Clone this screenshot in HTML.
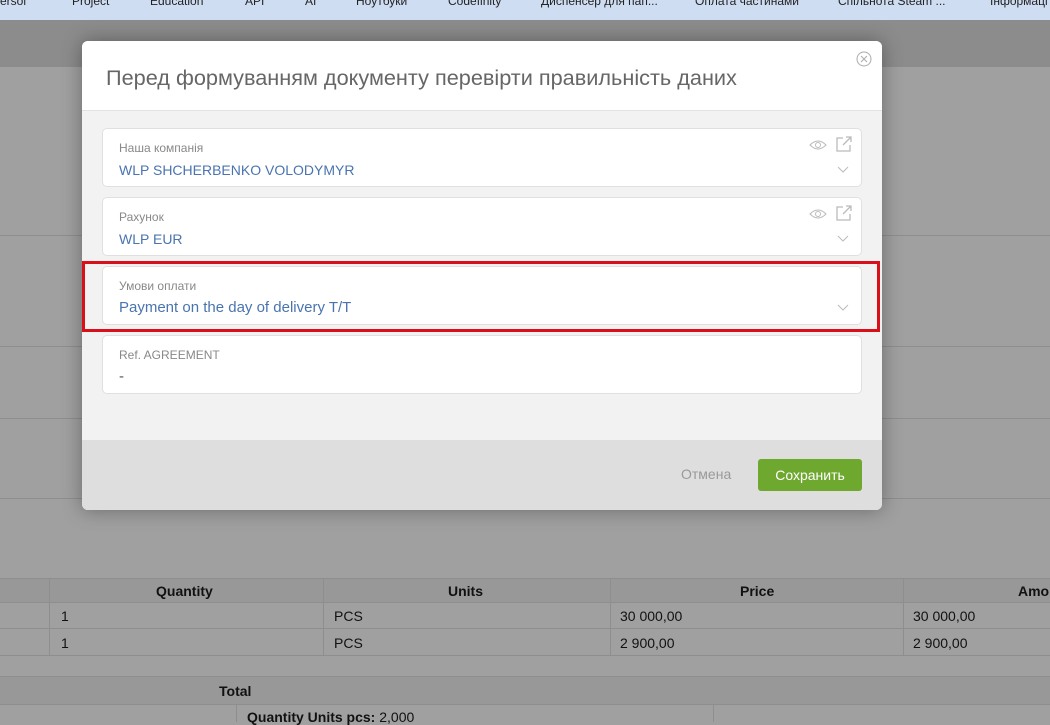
<!DOCTYPE html><html><head><meta charset="utf-8"><style>
*{box-sizing:border-box;margin:0;padding:0}
body{width:1050px;height:722px;overflow:hidden;background:#a0a0a0;font-family:"Liberation Sans","DejaVu Sans",sans-serif;position:relative}
.abs{position:absolute}
.bm{left:0;top:0;width:1050px;height:20px;background:#cfddf3;font-size:12px;color:#222;white-space:nowrap;overflow:hidden}
.bm span{position:absolute;top:-6px}
.hl{left:0;width:1050px;height:1px;background:#8e8e8e}
.vl{width:1px;background:#8e8e8e}
.tx{font-size:14px;color:#111}
.modal{left:82px;top:41px;width:800px;height:469px;border-radius:6px;background:#f2f2f2;overflow:hidden;box-shadow:0 0 20px rgba(0,0,0,.35)}
.hdr{position:absolute;left:0;top:0;width:800px;height:70px;background:#fff;border-bottom:1px solid #e2e2e2}
.hdr h1{position:absolute;left:24px;top:24px;font-weight:normal;font-size:21.7px;color:#666}
.ftr{position:absolute;left:0;top:399px;width:800px;height:70px;background:#dedede}
.f{position:absolute;left:20px;width:760px;height:59px;background:#fff;border:1px solid #e0e0e0;border-radius:5px}
.f .l{position:absolute;left:16px;top:12px;font-size:12px;color:#888}
.f .v{position:absolute;left:16px;top:32px;font-size:15px;color:#4a74b0}
</style></head><body>
<div class="abs bm"><span style="left:0">ersol</span><span style="left:72px">Project</span><span style="left:150px">Education</span><span style="left:245px">API</span><span style="left:305px">AI</span><span style="left:356px">Ноутбуки</span><span style="left:448px">Codefinity</span><span style="left:541px">Диспенсер для пап...</span><span style="left:695px">Оплата частинами</span><span style="left:838px">Спільнота Steam ...</span><span style="left:990px">Інформаці</span></div>
<div class="abs" style="left:0;top:20px;width:1050px;height:47px;background:#8c8c8c"></div>
<div class="abs hl" style="top:235px"></div><div class="abs hl" style="top:346px"></div><div class="abs hl" style="top:418px"></div><div class="abs hl" style="top:498px"></div>
<div class="abs hl" style="top:578px"></div><div class="abs hl" style="top:602px"></div><div class="abs hl" style="top:628px"></div><div class="abs hl" style="top:655px"></div><div class="abs hl" style="top:676px"></div><div class="abs hl" style="top:704px"></div>
<div class="abs" style="left:0;top:579px;width:1050px;height:23px;background:#989898"></div>
<div class="abs" style="left:0;top:677px;width:1050px;height:27px;background:#989898"></div>
<div class="abs vl" style="left:49px;top:578px;height:77px"></div><div class="abs vl" style="left:323px;top:578px;height:77px"></div><div class="abs vl" style="left:610px;top:578px;height:77px"></div><div class="abs vl" style="left:903px;top:578px;height:77px"></div>
<div class="abs vl" style="left:236px;top:704px;height:18px"></div><div class="abs vl" style="left:713px;top:704px;height:18px"></div>
<div class="abs tx" style="left:156px;top:583px;font-weight:bold">Quantity</div>
<div class="abs tx" style="left:448px;top:583px;font-weight:bold">Units</div>
<div class="abs tx" style="left:740px;top:583px;font-weight:bold">Price</div>
<div class="abs tx" style="left:1018px;top:583px;font-weight:bold">Amo</div>
<div class="abs tx" style="left:61px;top:608px">1</div><div class="abs tx" style="left:334px;top:608px">PCS</div><div class="abs tx" style="left:620px;top:608px">30 000,00</div><div class="abs tx" style="left:913px;top:608px">30 000,00</div>
<div class="abs tx" style="left:61px;top:635px">1</div><div class="abs tx" style="left:334px;top:635px">PCS</div><div class="abs tx" style="left:620px;top:635px">2 900,00</div><div class="abs tx" style="left:913px;top:635px">2 900,00</div>
<div class="abs tx" style="left:219px;top:683px;font-weight:bold">Total</div>
<div class="abs tx" style="left:247px;top:709px"><b>Quantity Units pcs:</b> 2,000</div>
<div class="abs modal">
<div class="hdr"><h1>Перед формуванням документу перевірти правильність даних</h1>
<svg style="position:absolute;left:774px;top:10px" width="16" height="16" viewBox="0 0 16 16"><circle cx="8" cy="8" r="7" fill="none" stroke="#aaa"/><path d="M5 5l6 6M11 5l-6 6" stroke="#aaa"/></svg></div>
<div class="f" style="top:87px"><div class="l">Наша компанія</div><div class="v" style="font-size:14px;top:33px">WLP SHCHERBENKO VOLODYMYR</div>
<svg style="position:absolute;left:706px;top:10px" width="18" height="12" viewBox="0 0 18 12"><path d="M1 6Q9-2 17 6Q9 14 1 6Z" fill="none" stroke="#bbb"/><circle cx="9" cy="6" r="2.5" fill="none" stroke="#bbb"/></svg>
<svg style="position:absolute;left:732px;top:6px" width="18" height="18" viewBox="0 0 18 18"><path d="M8 3H2v13h13v-6M11 2h5v5M16 2l-8 8" fill="none" stroke="#bbb" stroke-width="1.3"/></svg>
<svg style="position:absolute;left:734px;top:37px" width="12" height="8" viewBox="0 0 12 8"><path d="M1 1l5 5 5-5" fill="none" stroke="#bbb"/></svg></div>
<div class="f" style="top:156px"><div class="l">Рахунок</div><div class="v" style="font-size:14px;top:33px">WLP EUR</div>
<svg style="position:absolute;left:706px;top:10px" width="18" height="12" viewBox="0 0 18 12"><path d="M1 6Q9-2 17 6Q9 14 1 6Z" fill="none" stroke="#bbb"/><circle cx="9" cy="6" r="2.5" fill="none" stroke="#bbb"/></svg>
<svg style="position:absolute;left:732px;top:6px" width="18" height="18" viewBox="0 0 18 18"><path d="M8 3H2v13h13v-6M11 2h5v5M16 2l-8 8" fill="none" stroke="#bbb" stroke-width="1.3"/></svg>
<svg style="position:absolute;left:734px;top:37px" width="12" height="8" viewBox="0 0 12 8"><path d="M1 1l5 5 5-5" fill="none" stroke="#bbb"/></svg></div>
<div class="f" style="top:225px"><div class="l">Умови оплати</div><div class="v">Payment on the day of delivery T/T</div>
<svg style="position:absolute;left:734px;top:37px" width="12" height="8" viewBox="0 0 12 8"><path d="M1 1l5 5 5-5" fill="none" stroke="#bbb"/></svg></div>
<div class="f" style="top:294px"><div class="l">Ref. AGREEMENT</div><div class="v" style="color:#555">-</div></div>
<div class="ftr"><div style="position:absolute;left:599px;top:26px;font-size:14px;color:#999">Отмена</div>
<div style="position:absolute;left:676px;top:19px;width:104px;height:32px;background:#6fa82f;border-radius:3px;color:#fff;font-size:14px;text-align:center;line-height:32px">Сохранить</div></div>
</div>
<div class="abs" style="left:82px;top:261px;width:798px;height:71px;border:3px solid #d9101a"></div>
</body></html>
